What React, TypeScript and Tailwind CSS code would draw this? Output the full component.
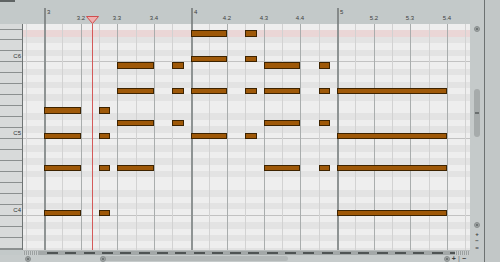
const ROW = 6.4;
const BEAT = 36.625;
const BAR3 = 21; // x of bar 3 inside the grid
const GRID_W = 447;
const GRID_H = 226;
const PLAYHEAD = 69;

type Note = { start: number; len: number; row: number };

const SHORT = 0.3125;

const notes: Note[] = [
  ...[13, 17, 22, 29].flatMap((r) => [
    { start: 0, len: 1, row: r },
    { start: 1.5, len: SHORT, row: r },
  ]),
  ...[6, 10, 15, 22].map((r) => ({ start: 2, len: 1, row: r })),
  ...[6, 10, 15].map((r) => ({ start: 3.5, len: SHORT, row: r })),
  ...[1, 5, 10, 17].flatMap((r) => [
    { start: 4, len: 1, row: r },
    { start: 5.5, len: SHORT, row: r },
  ]),
  ...[6, 10, 15, 22].flatMap((r) => [
    { start: 6, len: 1, row: r },
    { start: 7.5, len: SHORT, row: r },
  ]),
  ...[10, 17, 22, 29].map((r) => ({ start: 8, len: 3, row: r })),
];

const rows = Array.from({ length: 36 }, (_, i) => {
  const pc = (((17 - i) % 12) + 12) % 12;
  return { i, black: [1, 3, 6, 8, 10].includes(pc), isC: pc === 0 };
});

const lines = Array.from({ length: 25 }, (_, k) => {
  const j = k - 1;
  const x = Math.round(BAR3 + j * (BEAT / 2));
  const kind = j % 8 === 0 ? 'bar' : j % 2 === 0 ? 'beat' : 'half';
  return { x, kind };
}).filter((l) => l.x < GRID_W);

// white keys, top one partial
const keyStart = 5.5;
const keyH = 76.8 / 7;
const keys = [{ h: keyStart, label: '' }];
for (let y = keyStart, k = 0; y < GRID_H; y += keyH, k++) {
  const label = k === 2 ? 'C6' : k === 9 ? 'C5' : k === 16 ? 'C4' : '';
  keys.push({ h: Math.min(keyH, GRID_H - y), label });
}

const beatLabels: { x: number; text: string; bar: boolean }[] = [];
for (let bar = 3; bar <= 5; bar++) {
  for (let b = 1; b <= 4; b++) {
    const x = BAR3 + ((bar - 3) * 4 + (b - 1)) * BEAT;
    beatLabels.push({ x, text: b === 1 ? `${bar}` : `${bar}.${b}`, bar: b === 1 });
  }
}

function Dot() {
  return (
    <div className="w-[6px] h-[6px] rounded-full bg-[#9ea3a3] border border-[#8a8f8f] flex items-center justify-center">
      <div className="w-[2px] h-[2px] rounded-full bg-[#5f6464]" />
    </div>
  );
}

export default function App() {
  return (
    <div className="w-[500px] h-[262px] flex bg-[#c3c9c9] overflow-hidden font-['Liberation_Sans',Arial,sans-serif] text-[#3b4040]">
      {/* main column */}
      <div className="w-[470px] flex flex-col">
        {/* header + ruler */}
        <div className="h-[24px] flex">
          <div className="w-[23px]">
            <div className="w-[15px] h-[2px] bg-[#5f6464]" />
          </div>
          <div className="relative w-[447px]">
            {beatLabels.map((l) =>
              l.bar ? (
                <div key={l.text}>
                  <div className="absolute top-[8px] bottom-0 w-[2px] bg-[#858a8a]" style={{ left: Math.round(l.x) }} />
                  <span className="absolute top-[9px] text-[6px] leading-none" style={{ left: Math.round(l.x) + 3 }}>
                    {l.text}
                  </span>
                </div>
              ) : (
                <span
                  key={l.text}
                  className="absolute top-[15px] text-[6px] leading-none -translate-x-1/2"
                  style={{ left: Math.round(l.x) }}
                >
                  {l.text}
                </span>
              )
            )}
            <svg className="absolute top-[16px] w-[13px] h-[8px]" style={{ left: PLAYHEAD - 6 }} viewBox="0 0 13 8">
              <path d="M0.5 0.5 H12.5 L6.5 7.5 Z" fill="#eeb0b0" stroke="#d04e4e" strokeWidth="1" />
            </svg>
          </div>
        </div>

        {/* keys + grid */}
        <div className="h-[226px] flex">
          <div className="w-[23px] flex flex-col border-r border-[#6f7474] bg-[#d8dada] overflow-hidden">
            {keys.map((k, i) => (
              <div
                key={i}
                className="shrink-0 border-b border-[#8b8f8f] flex items-center justify-end pr-[1px] text-[6px] leading-none text-[#2f3333]"
                style={{ height: k.h }}
              >
                {k.label}
              </div>
            ))}
          </div>
          <div className="relative w-[447px] overflow-hidden">
            <div className="flex flex-col">
              {rows.map((r) => (
                <div
                  key={r.i}
                  className={`shrink-0 h-[6.4px] ${r.i === 1 ? 'bg-[#ead6d6]' : r.black ? 'bg-[#e3e3e3]' : 'bg-[#eeeeee]'} ${r.isC ? 'border-b border-[#c2c2c2]' : ''}`}
                />
              ))}
            </div>
            {lines.map((l) => (
              <div
                key={l.x}
                className={`absolute top-0 bottom-0 ${l.kind === 'bar' ? 'w-[2px] bg-[#8e9393]' : l.kind === 'beat' ? 'w-px bg-[#a9adad]' : 'w-px bg-[#d2d2d2]'}`}
                style={{ left: l.x }}
              />
            ))}
            {notes.map((n, i) => {
              const left = Math.round(BAR3 + n.start * BEAT);
              const right = Math.round(BAR3 + (n.start + n.len) * BEAT);
              const top = Math.round(n.row * ROW);
              const bottom = Math.round((n.row + 1) * ROW);
              return (
                <div
                  key={i}
                  className="absolute bg-[#9e5808] border border-[#3d2300]"
                  style={{ left, width: right - left, top, height: bottom - top }}
                />
              );
            })}
            <div className="absolute top-0 bottom-0 w-px bg-[#d45a5a]" style={{ left: PLAYHEAD }} />
          </div>
        </div>

        {/* loop strip */}
        <div className="h-[5px] flex">
          <div className="w-[23px]" />
          <div className="relative w-[447px] bg-[#a3a8a8] border-t border-[#b9bdbd] overflow-hidden">
            <div className="absolute left-0 top-0 bottom-0 w-[15px] bg-[repeating-linear-gradient(90deg,#c9cdcd_0px,#c9cdcd_1px,#9ba0a0_1px,#9ba0a0_2px)]" />
            {lines
              .filter((l) => l.x > 16 && l.x < 430)
              .map((l) => (
                <div key={l.x} className="absolute top-[1px] h-[2px] w-[11px] bg-[#4f5454]" style={{ left: l.x + 3 }} />
              ))}
            <div className="absolute right-0 top-0 bottom-0 w-[15px] bg-[repeating-linear-gradient(90deg,#c9cdcd_0px,#c9cdcd_1px,#9ba0a0_1px,#9ba0a0_2px)]" />
          </div>
        </div>

        {/* horizontal scroll */}
        <div className="flex-1 flex items-center bg-[#c6cbcb]">
          <div className="ml-[25px]">
            <Dot />
          </div>
          <div className="ml-[69px] w-[188px] h-[5px] rounded-full bg-[#b3b8b8] flex items-center">
            <Dot />
          </div>
          <div className="ml-auto mr-[4px] flex items-center gap-[2px] text-[7px] font-bold leading-[7px] text-[#3b4040]">
            <Dot />
            <span>+</span>
            <span className="text-[#8a8f8f]">|</span>
            <span>−</span>
          </div>
        </div>
      </div>

      {/* vertical scroll column */}
      <div className="w-[14px] flex flex-col items-center bg-[#c5caca]">
        <div className="mt-[26px]">
          <Dot />
        </div>
        <div className="mt-[57px] w-[6px] h-[48px] rounded-full bg-[#a6abab] flex items-center justify-center">
          <div className="w-[4px] h-[2px] border-y border-[#6a6f6f]" />
        </div>
        <div className="mt-[85px]">
          <Dot />
        </div>
        <div className="mt-[3px] flex flex-col items-center text-[6px] font-bold leading-[7px] text-[#3b4040]">
          <span className="h-[7px]">+</span>
          <span className="h-[7px]">−</span>
          <span className="h-[7px]">=</span>
        </div>
      </div>
      <div className="w-px bg-[#6d7272]" />
      <div className="flex-1 bg-[#c2c7c7]" />
    </div>
  );
}
